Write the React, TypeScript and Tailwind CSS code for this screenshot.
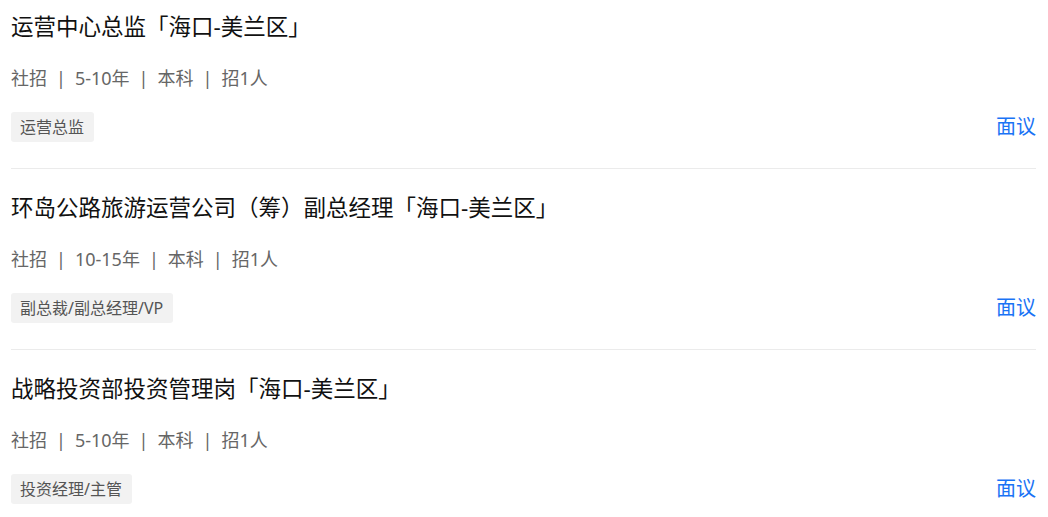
import React from "react";

const jobs = [
  { title: "运营中心总监「海口-美兰区」", exp: "5-10年", tag: "运营总监" },
  { title: "环岛公路旅游运营公司（筹）副总经理「海口-美兰区」", exp: "10-15年", tag: "副总裁/副总经理/VP" },
  { title: "战略投资部投资管理岗「海口-美兰区」", exp: "5-10年", tag: "投资经理/主管" },
];

function Sep() {
  return <span className="mx-[9px] text-[#666]">|</span>;
}

export default function App() {
  return (
    <div
      className="w-[1048px] h-[517px] overflow-hidden bg-white px-[11px]"
      style={{ fontFamily: '"Noto Sans", "Noto Sans CJK SC", sans-serif' }}
    >
      <div className="-mt-[12px] pr-[1px]">
        {jobs.map((j, i) => (
          <div key={i} className="border-b border-[#ebebeb] pt-[25px] pb-[26px]">
            <div className="h-[28px] leading-[28px] text-[22.5px] text-[#111]">{j.title}</div>
            <div className="mt-[25px] h-[24px] leading-[24px] text-[18px] text-[#666] flex items-center">
              <span>社招</span>
              <Sep />
              <span>{j.exp}</span>
              <Sep />
              <span>本科</span>
              <Sep />
              <span>招1人</span>
            </div>
            <div className="mt-[22px] flex items-center justify-between">
              <span className="h-[30px] leading-[30px] pl-[9px] pr-[10px] rounded-[3px] bg-[#f2f2f2] text-[16px] text-[#555]">
                {j.tag}
              </span>
              <span className="text-[20px] text-[#1a73f5] leading-[30px]">面议</span>
            </div>
          </div>
        ))}
      </div>
    </div>
  );
}
